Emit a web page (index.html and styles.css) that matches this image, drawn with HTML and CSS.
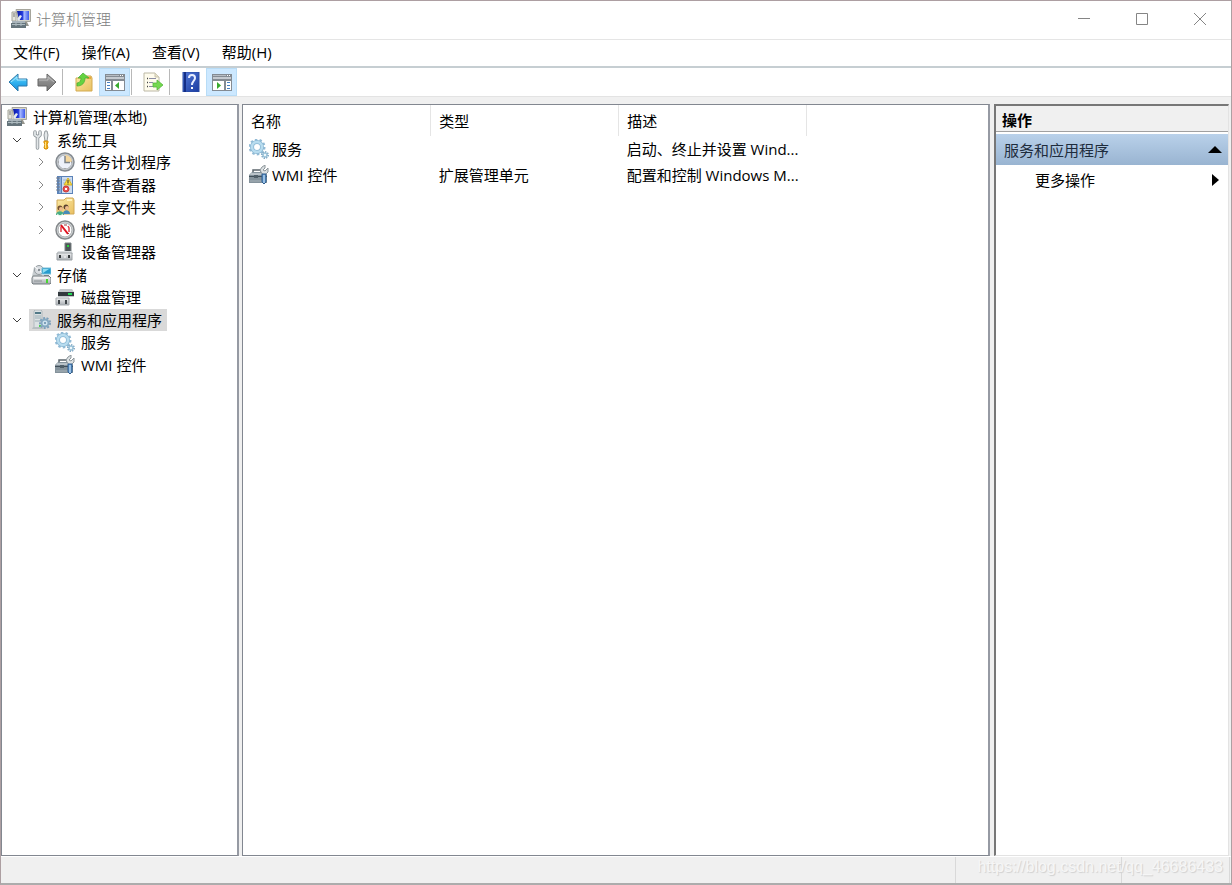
FILE: index.html
```html
<!DOCTYPE html>
<html lang="zh-CN">
<head>
<meta charset="utf-8">
<title>计算机管理</title>
<link rel="stylesheet" href="styles.css">
</head>
<body>
<svg class="defs" aria-hidden="true">
  <defs>
    <linearGradient id="blueArrow" x1="0" y1="0" x2="0" y2="1"><stop offset="0" stop-color="#7fdcfb"/><stop offset=".5" stop-color="#31b2ef"/><stop offset="1" stop-color="#1688d8"/></linearGradient>
    <linearGradient id="greyArrow" x1="0" y1="0" x2="0" y2="1"><stop offset="0" stop-color="#b5b5b5"/><stop offset=".5" stop-color="#888"/><stop offset="1" stop-color="#747474"/></linearGradient>
    <linearGradient id="folder" x1="0" y1="0" x2="1" y2="1"><stop offset="0" stop-color="#fbe9a4"/><stop offset="1" stop-color="#e9c062"/></linearGradient>
    <linearGradient id="metal" x1="0" y1="0" x2="0" y2="1"><stop offset="0" stop-color="#f0f1f2"/><stop offset="1" stop-color="#a9aeb3"/></linearGradient>
    <linearGradient id="screen" x1="0" y1="0" x2="1" y2="0"><stop offset="0" stop-color="#0818a0"/><stop offset=".45" stop-color="#2037dc"/><stop offset=".6" stop-color="#a8baff"/><stop offset="1" stop-color="#3b58eb"/></linearGradient>
    <linearGradient id="help" x1="0" y1="0" x2="1" y2="1"><stop offset="0" stop-color="#5379d8"/><stop offset="1" stop-color="#193ba0"/></linearGradient>
    <symbol id="computer" viewBox="0 0 20 20">
      <path d="M5 .5h14.500v12H7z" fill="#d5d4ca" stroke="#a6a59c"/>
      <path d="M6 2h12v9H8z" fill="url(#screen)"/>
      <path d="M10 13h6l2 4H10z" fill="#95958d"/>
      <path d="M1 3h4v9H1z" fill="#e5e5de" stroke="#a3a398"/><path d="M2 5h2M2 7h2" stroke="#777"/>
      <path d="M6 10l3-4 2 1-3 5z" fill="#e4eaf1"/>
      <path d="M1 12h13v3H1z" fill="#a9b4bb"/><path d="M0 14h15v5H0z" fill="#66757c"/>
      <path d="M1 15.500h13M5 13v4M10 13v4" stroke="#aebbc0"/>
    </symbol>
    <symbol id="tools" viewBox="0 0 20 20">
      <path d="M4 2v3l3 2 2-2V2M6.500 8v10" fill="none" stroke="#8d9499" stroke-width="3.500" stroke-linecap="round" stroke-linejoin="round"/>
      <path d="M4 2v3l3 2 2-2V2M6.500 8v10" fill="none" stroke="#e3e7e9" stroke-width="1.800" stroke-linecap="round" stroke-linejoin="round"/>
      <path d="M14 1h2l1 4-1 6h-2l-1-6z" fill="#e4e8ea" stroke="#959b9f"/>
      <path d="M13 11h4v2l-1 1 1 4-1 1h-2l-1-1 1-4-1-1z" fill="#f2ac14" stroke="#d6910e"/><path d="M14.500 12v6" stroke="#ffe489"/>
    </symbol>
    <symbol id="clock" viewBox="0 0 20 20">
      <circle cx="10" cy="10" r="9" fill="#c9ced2" stroke="#858b91" stroke-width="1.500"/><circle cx="10" cy="10" r="7" fill="#eef2fb" stroke="#b2b6ba"/>
      <path d="M10 10V3a7 7 0 0 1 7 7z" fill="#f4d79f"/><path d="M10 4v6.500h5" fill="none" stroke="#7c848c" stroke-width="1.500"/><path d="M3 10h1M10 16v1M16 10h1" stroke="#888"/>
    </symbol>
    <symbol id="event" viewBox="0 0 20 20">
      <path d="M2 1h16v18H2z" fill="#5b83b9"/><path d="M4 2h2v16H4z" fill="#8dafd8"/><path d="M7 2h10v16H7z" fill="#cddcef"/>
      <path d="M1 3h4M1 6h4M1 9h4M1 12h4M1 15h4" stroke="#777f8c"/><path d="M8 5h8M8 8h8" stroke="#9bb4d3"/>
      <path d="M13 3l4 7H9z" fill="#ffdf3d" stroke="#d3b12b"/><path d="M13 5v3M13 8.500v1" stroke="#333"/>
      <circle cx="11" cy="14" r="3" fill="#e65353" stroke="#cc3c3c"/><path d="M10 13l2 2m0-2l-2 2" stroke="#fff"/>
    </symbol>
    <symbol id="shared" viewBox="0 0 20 20">
      <path d="M2 3h7l2-2h7l1 2v14H2z" fill="url(#folder)" stroke="#d1a956"/><path d="M12 3h5" stroke="#fff3bd" stroke-width="2"/>
      <path d="M1 18c0-5 8-5 8 0z" fill="#45ad87"/><path d="M8 17c0-5 7-5 7 0z" fill="#488bb8"/>
      <circle cx="5" cy="11" r="2.500" fill="#725032"/><circle cx="6" cy="12" r="2" fill="#efbd8c"/>
      <circle cx="11" cy="10" r="2.500" fill="#5b422f"/><circle cx="12" cy="11" r="2" fill="#efbd8c"/>
      <path d="M2 17l3 2 3-2" stroke="#e6f5e7" fill="none"/>
    </symbol>
    <symbol id="performance" viewBox="0 0 20 20">
      <circle cx="10" cy="10" r="9" fill="#d8dcdd" stroke="#85898c" stroke-width="1.500"/><circle cx="10" cy="10" r="7" fill="#fff" stroke="#a6aaac"/>
      <path d="M6 12V7l1-1M13 6l1 2v4" fill="none" stroke="#e33e48" stroke-width="1.500"/><path d="M6 5l7 9" stroke="#e0111d" stroke-width="2"/><path d="M9 5h3M14 13l-1 1" stroke="#9b3b40"/>
    </symbol>
    <symbol id="device" viewBox="0 0 20 20">
      <path d="M10 1h6v10h-6z" fill="#4e5558" stroke="#7b8284"/><path d="M13 3v2" stroke="#29d43b" stroke-width="2"/>
      <path d="M3 9h14l1 3H2z" fill="#d9dde0"/><path d="M2 11h15v7H2z" fill="url(#metal)" stroke="#9ca1a5"/><path d="M4 13h2v3H4zM13 13h2v3h-2z" fill="#34383b"/><path d="M9 15h2" stroke="#fff"/>
    </symbol>
    <symbol id="storage" viewBox="0 0 20 20">
      <path d="M1 11l2-9h8v9z" fill="#c7cdd0"/><circle cx="8" cy="5" r="4.500" fill="#d8dce0" stroke="#949b9f"/><path d="M8 5L4 2M8 5l3 3" stroke="#fff"/><circle cx="8" cy="5" r="1" fill="#677178"/>
      <path d="M11 3h9v6h-9z" fill="#259bcd" stroke="#78bed8"/><path d="M12 4h6l-6 4z" fill="#8edcf1"/><path d="M13 10h5v1h-5z" fill="#788389"/>
      <path d="M2 11h16l2 2v5l-1 1H2l-1-1v-5z" fill="url(#metal)" stroke="#777e82"/><path d="M3 13h14" stroke="#fff"/><path d="M3 16h8" stroke="#8c9295"/><path d="M16 14v4" stroke="#48d633" stroke-width="2"/>
    </symbol>
    <symbol id="disk" viewBox="0 0 20 20">
      <path d="M5 2h12l2 3v5H3V5z" fill="#c3c8cb"/><path d="M3 5h16v4H3z" fill="#333a3e"/><path d="M13 7h4" stroke="#23da55" stroke-width="2"/>
      <path d="M1 11h13v7H1z" fill="url(#metal)" stroke="#a5aaae"/><path d="M3 13h2v4H3zM10 13h2v4h-2z" fill="#3e4448"/>
    </symbol>
    <symbol id="gear" viewBox="0 0 20 20">
      <circle cx="8" cy="8" r="7" fill="none" stroke="#92bad5" stroke-width="3" stroke-dasharray="2.300 2.100"/><circle cx="8" cy="8" r="5" fill="none" stroke="#8ab8d4" stroke-width="4"/><circle cx="8" cy="8" r="5" fill="none" stroke="#b8dcef" stroke-width="2.500"/>
      <circle cx="16" cy="16" r="3" fill="none" stroke="#82a9c4" stroke-width="2" stroke-dasharray="1.300 1"/><circle cx="16" cy="16" r="2" fill="#eef8fc" stroke="#9ac1d8" stroke-width="1.500"/>
    </symbol>
    <symbol id="server" viewBox="0 0 20 20">
      <path d="M3 1l1-1h6l1 1v17H3z" fill="#dce2e4" stroke="#b1babe"/><path d="M4 3h6" stroke="#527987" stroke-width="2"/><path d="M4 6h6M4 8h6M4 11h6" stroke="#9caeb5"/><path d="M2 17h10v2H1z" fill="#b7bfc2"/><path d="M8 16h2" stroke="#4ed253" stroke-width="2"/>
      <circle cx="14" cy="13" r="5" fill="none" stroke="#7d9fba" stroke-width="2" stroke-dasharray="2 1.500"/><circle cx="14" cy="13" r="3.500" fill="#cfe3ef" stroke="#85a9c1" stroke-width="2"/><circle cx="14" cy="13" r="1" fill="#638aa7"/>
    </symbol>
    <symbol id="toolbox" viewBox="0 0 20 20">
      <path d="M4 7V5h8v2" fill="none" stroke="#5c666c" stroke-width="1.500"/><path d="M3 7h13l2 3v8H0v-8z" fill="#84929b"/><path d="M2 8h15l1 2H1z" fill="#b9c2c8"/><path d="M0 11.500h18" stroke="#414f59"/><path d="M5 10h4v3H5z" fill="#505f69"/><path d="M1 16h12" stroke="#a9b4ba"/>
      <path d="M11 5l2-3 3-2v3l-2 2 2 1 3-3v4l-3 3-3-1z" fill="#dce1e3" stroke="#8c959a"/><path d="M13 9h4v8l-2 2-2-2z" fill="#5b91c8" stroke="#315f8f"/><path d="M15 10v8" stroke="#d9efff"/>
    </symbol>
    <symbol id="back" viewBox="0 0 20 20"><path d="M1 10l9-8v5h9v7h-9v5z" fill="url(#blueArrow)" stroke="#2d79ab" stroke-linejoin="round"/><path d="M3 10l6-5v3h9" fill="none" stroke="#a5e8ff"/></symbol>
    <symbol id="forward" viewBox="0 0 20 20"><path d="M19 10l-9-8v5H1v7h9v5z" fill="url(#greyArrow)" stroke="#666" stroke-linejoin="round"/><path d="M2 8h9V5l6 5" fill="none" stroke="#bbb"/></symbol>
    <symbol id="up" viewBox="0 0 20 20"><path d="M2 6h9l1-2h5l1 2v13H2z" fill="url(#folder)" stroke="#d3aa51"/><path d="M13 5h4v2h-4z" fill="#e9a83c"/><path d="M3 11c3 0 4-3 4-5H4l5-5 6 5h-4c0 5-3 8-8 8z" fill="#65d341" stroke="#45ab32" stroke-width=".7"/></symbol>
    <symbol id="pane" viewBox="0 0 20 20"><path d="M0 2h20v17H0z" fill="#848b93"/><path d="M1 3.500h13" stroke="#b7bdc4"/><path d="M15 3.500h1M17 3.500h1" stroke="#fff"/><path d="M1 6h18" stroke="#c5cad0" stroke-width="2"/><path d="M1 9h5v9H1zM8 9h11v9H8z" fill="#fff"/><path d="M2 10.500h3M2 13.500h3M2 16.500h3" stroke="#4580c4"/><path d="M14 10v7l-4-3.500z" fill="#37aa2d"/></symbol>
    <symbol id="actionpane" viewBox="0 0 20 20"><path d="M0 2h20v17H0z" fill="#848b93"/><path d="M1 3.500h13" stroke="#b7bdc4"/><path d="M15 3.500h1M17 3.500h1" stroke="#fff"/><path d="M1 6h18" stroke="#c5cad0" stroke-width="2"/><path d="M1 9h11v9H1zM14 9h5v9h-5z" fill="#fff"/><path d="M15 10.500h3M15 13.500h3M15 16.500h3" stroke="#4580c4"/><path d="M5 10v7l4-3.500z" fill="#37aa2d"/></symbol>
    <symbol id="export" viewBox="0 0 20 20"><path d="M1 1h11l4 4v14H1z" fill="#fffced" stroke="#bcb8a5"/><path d="M12 1v4h4" fill="#e7e2c9" stroke="#c9c4ae"/><path d="M4 6.500h1M4 10.500h1M4 14.500h1" stroke="#444" stroke-width="1.500"/><path d="M6 6.500h7M6 10.500h4M6 14.500h5" stroke="#8b8ca5"/><path d="M10 11h4V8l6 5-6 5v-3h-4z" fill="#74d94f" stroke="#57b540" stroke-width=".8"/></symbol>
    <symbol id="book" viewBox="0 0 20 20"><path d="M2 0h16v20H2z" fill="url(#help)" stroke="#284aa2"/><path d="M4 0v20" stroke="#142e86" stroke-width="2"/><path d="M8 6c0-4 6-4 6 0 0 3-3 3-3 7" stroke="#e8eeff" stroke-width="2" fill="none"/><path d="M10 15h2v2h-2z" fill="#fff"/></symbol>
  </defs>
</svg>
<div class="window">
  <header class="titlebar">
    <svg class="icon"><use href="#computer"/></svg>
    <h1 class="title">计算机管理</h1>
    <button class="caption" aria-label="最小化"><svg viewBox="0 0 12 12"><path d="M0 5.500h12"/></svg></button>
    <button class="caption" aria-label="最大化"><svg viewBox="0 0 12 12"><path d="M.5.500h11v11H.5z"/></svg></button>
    <button class="caption" aria-label="关闭"><svg viewBox="0 0 12 12"><path d="M0 0l12 12M12 0L0 12"/></svg></button>
  </header>
  <nav class="menubar" aria-label="菜单">
    <button>文件(F)</button><button>操作(A)</button><button>查看(V)</button><button>帮助(H)</button>
  </nav>
  <div class="toolbar" role="toolbar" aria-label="工具栏">
    <button class="tool" aria-label="后退"><svg class="icon"><use href="#back"/></svg></button>
    <button class="tool" aria-label="前进"><svg class="icon"><use href="#forward"/></svg></button>
    <span class="divider"></span>
    <button class="tool wide" aria-label="上一级"><svg class="icon"><use href="#up"/></svg></button>
    <button class="tool pressed" aria-pressed="true" aria-label="显示/隐藏控制台树"><svg class="icon"><use href="#pane"/></svg></button>
    <span class="divider"></span>
    <button class="tool wide" aria-label="导出列表"><svg class="icon"><use href="#export"/></svg></button>
    <span class="divider"></span>
    <button class="tool wide" aria-label="帮助"><svg class="icon"><use href="#book"/></svg></button>
    <button class="tool pressed" aria-pressed="true" aria-label="显示/隐藏操作窗格"><svg class="icon"><use href="#actionpane"/></svg></button>
  </div>
  <main class="workspace">
    <section class="pane">
      <ul class="tree" role="tree" aria-label="控制台树">
        <li class="node root" role="treeitem" aria-level="1"><span class="label"><svg class="icon"><use href="#computer"/></svg>计算机管理(本地)</span></li>
        <li class="node" role="treeitem" aria-level="2"><button class="twist open" aria-label="折叠"><svg viewBox="0 0 8 8"><path d="M0 2l4 4 4-4"/></svg></button><span class="label"><svg class="icon"><use href="#tools"/></svg>系统工具</span></li>
        <li class="node child" role="treeitem" aria-level="3"><button class="twist" aria-label="展开"><svg viewBox="0 0 8 8"><path d="M2 0l4 4-4 4"/></svg></button><span class="label"><svg class="icon"><use href="#clock"/></svg>任务计划程序</span></li>
        <li class="node child" role="treeitem" aria-level="3"><button class="twist" aria-label="展开"><svg viewBox="0 0 8 8"><path d="M2 0l4 4-4 4"/></svg></button><span class="label"><svg class="icon"><use href="#event"/></svg>事件查看器</span></li>
        <li class="node child" role="treeitem" aria-level="3"><button class="twist" aria-label="展开"><svg viewBox="0 0 8 8"><path d="M2 0l4 4-4 4"/></svg></button><span class="label"><svg class="icon"><use href="#shared"/></svg>共享文件夹</span></li>
        <li class="node child" role="treeitem" aria-level="3"><button class="twist" aria-label="展开"><svg viewBox="0 0 8 8"><path d="M2 0l4 4-4 4"/></svg></button><span class="label"><svg class="icon"><use href="#performance"/></svg>性能</span></li>
        <li class="node child" role="treeitem" aria-level="3"><span class="twist"></span><span class="label"><svg class="icon"><use href="#device"/></svg>设备管理器</span></li>
        <li class="node" role="treeitem" aria-level="2"><button class="twist open" aria-label="折叠"><svg viewBox="0 0 8 8"><path d="M0 2l4 4 4-4"/></svg></button><span class="label"><svg class="icon"><use href="#storage"/></svg>存储</span></li>
        <li class="node child" role="treeitem" aria-level="3"><span class="twist"></span><span class="label"><svg class="icon"><use href="#disk"/></svg>磁盘管理</span></li>
        <li class="node" role="treeitem" aria-level="2" aria-selected="true"><button class="twist open" aria-label="折叠"><svg viewBox="0 0 8 8"><path d="M0 2l4 4 4-4"/></svg></button><span class="label selected"><svg class="icon"><use href="#server"/></svg>服务和应用程序</span></li>
        <li class="node child" role="treeitem" aria-level="3"><span class="twist"></span><span class="label"><svg class="icon"><use href="#gear"/></svg>服务</span></li>
        <li class="node child" role="treeitem" aria-level="3"><span class="twist"></span><span class="label"><svg class="icon"><use href="#toolbox"/></svg>WMI 控件</span></li>
      </ul>
    </section>
    <section class="pane">
      <table class="list">
        <thead><tr><th scope="col">名称</th><th scope="col">类型</th><th scope="col">描述</th></tr></thead>
        <tbody>
          <tr><td><span class="item"><svg class="icon"><use href="#gear"/></svg>服务</span></td><td></td><td>启动、终止并设置 Wind...</td></tr>
          <tr><td><span class="item"><svg class="icon"><use href="#toolbox"/></svg>WMI 控件</span></td><td>扩展管理单元</td><td>配置和控制 Windows M...</td></tr>
        </tbody>
      </table>
    </section>
    <aside class="actions">
      <h2 class="actions-title">操作</h2>
      <button class="group">服务和应用程序<svg class="arrow" viewBox="0 0 14 14"><path d="M0 10l7-7 7 7z"/></svg></button>
      <button class="more">更多操作<svg class="arrow" viewBox="0 0 14 14"><path d="M4 1l7 6-7 6z"/></svg></button>
    </aside>
  </main>
  <footer class="statusbar"><span class="status-main"></span><span class="status-part"></span><span class="status-end"></span><span class="watermark">https://blog.csdn.net/qq_46686433</span></footer>
</div>
</body>
</html>
```
FILE: styles.css
```css
* { box-sizing: border-box; }
body { margin: 0; font: 15px/22px "Open Sans", "Noto Sans CJK SC", sans-serif; color: #000; }
button { border: 0; margin: 0; padding: 0; background: none; font: inherit; color: inherit; }
svg { display: block; flex: none; }
.defs { position: absolute; width: 0; height: 0; }
.icon { width: 20px; height: 20px; }
.window { min-height: 100vh; display: flex; flex-direction: column; background: #f0f0f0; border: 1px solid #ad9fa2; border-bottom: 2px solid #acacac; }
.titlebar { height: 39px; display: flex; align-items: center; padding: 0 2px 2px 10px; background: #fff; border-bottom: 1px solid #e5e5e5; }
.title { flex: 1; margin: 0 0 0 5px; font-size: 15px; font-weight: 300; color: #808080; }
.caption { width: 58px; height: 36px; display: grid; place-items: center; }
.caption svg { width: 12px; height: 12px; fill: none; stroke: #858585; }
.menubar { height: 28px; display: flex; align-items: center; gap: 22px; padding: 0 0 2px 12px; background: #fff; border-bottom: 2px solid #c6ced2; }
.toolbar { height: 29px; display: flex; align-items: center; padding-left: 2px; background: #fff; border-bottom: 1px solid #e3e3e3; }
.tool { width: 29px; height: 28px; display: grid; place-items: center; }
.wide { width: 36px; padding-left: 6px; }
.pressed { width: 31px; background: #cce8ff; border: 1px solid #b8dcf6; }
.divider { width: 1px; height: 26px; margin-left: 1px; background: #b8b8b8; }
.workspace { flex: 1; display: grid; grid-template-columns: 238px minmax(0, 1fr) 235px; gap: 4px; padding: 7px 2px 0 0; }
.pane { background: #fff; border: 1px solid #828790; border-right-color: #969aa3; border-right-width: 2px; overflow: hidden; }
.pane + .pane { margin-left: -1px; }
.tree { list-style: none; margin: 0; padding: 1px 0 0 5px; height: 271px; display: grid; grid-template-rows: repeat(12, 1fr); }
.node { display: flex; align-items: center; }
.child { padding-left: 24px; }
.twist { width: 22px; height: 22px; display: grid; place-items: center start; padding-left: 6px; }
.twist svg { width: 8px; height: 8px; fill: none; stroke: #8a8a8a; }
.open svg { stroke: #404040; stroke-width: 1px; }
.label { display: flex; align-items: center; gap: 6px; padding: 0 5px 0 2px; white-space: nowrap; }
.root .label { padding-left: 0; }
.selected { background: #d9d9d9; }
.list { width: 564px; table-layout: fixed; border-collapse: collapse; }
.list th { height: 31px; padding: 1px 0 0 8px; border-right: 1px solid #e5e5e5; text-align: left; font-weight: 400; }
.list td { height: 26px; padding: 0 0 0 8px; white-space: nowrap; }
.list td:first-child { padding-left: 6px; }
.item { display: flex; align-items: center; gap: 3px; }
.actions { background: #fff; border: 2px solid #777; border-right: 1px solid #e3e3e3; border-bottom: 1px solid #e3e3e3; }
.actions-title { height: 26px; margin: 0 0 2px; padding: 3px 6px 0; background: #f0f0f0; border-bottom: 1px solid #a0a0a0; font-size: 15px; font-weight: 700; line-height: 22px; }
.group, .more { width: 100%; height: 31px; display: flex; align-items: center; justify-content: space-between; padding: 0 6px 0 8px; }
.group { background: linear-gradient(#b9d1ea, #99b4d1); color: #1e2c3d; }
.more { height: 30px; padding-left: 39px; }
.arrow { width: 14px; height: 14px; fill: #000; }
.statusbar { position: relative; height: 27px; display: flex; justify-content: flex-end; padding-right: 1px; border-top: 1px solid #fff; }
.status-main, .status-part, .status-end { border-right: 1px solid #d9d9d9; }
.status-main { flex: 1; }
.status-part { width: 166px; }
.status-end { width: 108px; }
.watermark { position: absolute; right: 8px; top: 0; font: 16px/20px "Liberation Sans", Arial, sans-serif; color: #f6f6f6; text-shadow: 1px 1px 1px #d0d0d0; }
```
